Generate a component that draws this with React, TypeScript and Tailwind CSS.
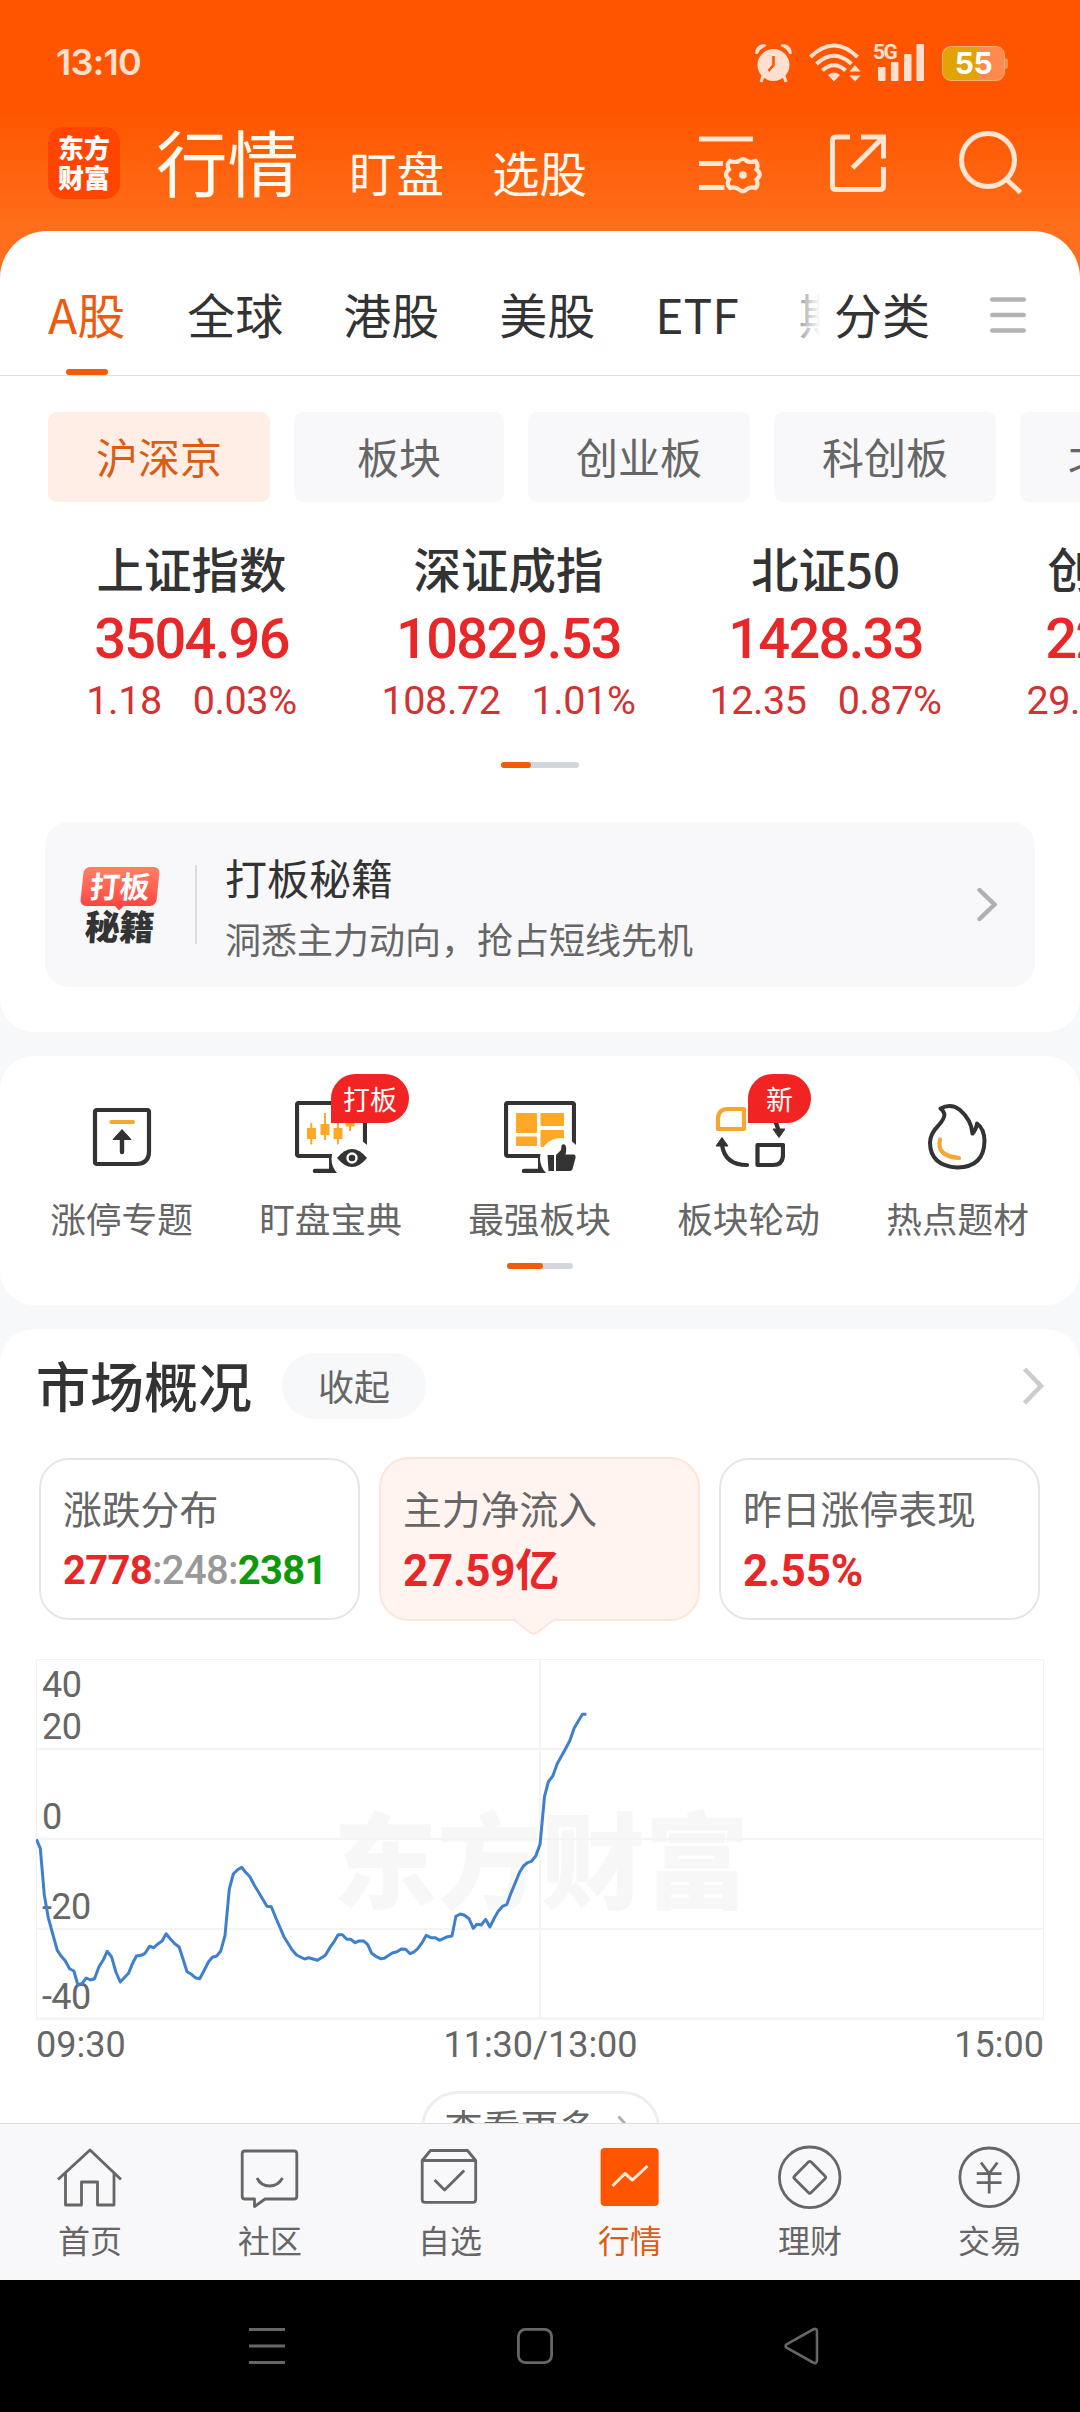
import type { ReactNode } from "react";
import clsx from "clsx";

const tabs = ["A股", "全球", "港股", "美股", "ETF", "期货"];

const boards = ["沪深京", "板块", "创业板", "科创板", "北交所"];

const indices = [
  { name: "上证指数", price: "3504.96", change: "1.18", percent: "0.03%" },
  { name: "深证成指", price: "10829.53", change: "108.72", percent: "1.01%" },
  { name: "北证50", price: "1428.33", change: "12.35", percent: "0.87%" },
  { name: "创业板指", price: "2207.10", change: "29.15", percent: "1.34%" },
];

const flowLine =
  "0.4,180.3 4.3,189.3 8.3,236 12.2,258.3 17,276 21.3,291.3 25.3,297.3 29.2,301.7 33.6,309.7 37.9,312 41.9,326 46.2,324.3 50.2,319 54.5,321 58.5,319.7 62.9,308 67.2,301 71.2,292.3 75.5,297.7 79.9,313 84.2,323 92.5,314.3 96.9,303.7 100.4,297 105.2,296.3 109.1,294.3 113.5,287.3 117.8,288.7 121.8,285 126.1,282 130.1,274.7 134.4,280 138.8,284.7 143.1,288 147.1,300.3 151,312.7 155.4,315.3 159.3,318.7 163.7,319.7 168,311.7 172.4,303 176.3,298.3 180.7,297 184.6,292.3 189,276.7 193.3,230 197.3,215 201.6,210.7 205.6,208.3 209.6,213.3 213.9,217.7 218.2,226 222.6,233.3 230.9,247.3 235.3,247.7 239.6,258.3 247.9,277.7 256.2,291 260.6,296 268.5,300 272.8,298.7 281.5,301.3 289.4,296.3 293.8,288.7 298.1,282.7 302.1,275.7 306.4,275.7 310.8,280.3 314.7,280.3 319.1,283.7 323,282 327.8,282 331.7,285.7 335.7,294.3 340.4,297.7 344.4,299.7 348.3,299.3 356.3,294 361,292.7 365.3,290 369.7,290.3 374,294.7 378,293 382,289.3 386.3,283.3 390.3,276.3 395,278.7 399.4,278.7 403.3,281.3 411.6,277.7 416,277 419.9,257.3 424.3,255 428.6,256.3 433,259.7 437.3,269.3 440.9,265.3 445.2,266 449.6,260.3 453.9,268 458.3,259 462.2,252.3 466.6,247.3 470.9,245.3 474.9,234.3 479.2,224 483.6,213.3 487.5,207 491.5,203.7 495.4,202.3 499.8,197 504.1,185 508.5,137.7 512.4,122.7 516.8,117 521.1,105 529.4,90 533.8,81.7 538.1,69.3 542.5,61.7 546.4,55.3 550.4,55.3";

const yLabels = [
  { text: "40", y: 38 },
  { text: "20", y: 80 },
  { text: "0", y: 170 },
  { text: "-20", y: 260 },
  { text: "-40", y: 350 },
];

function StatusBar() {
  return (
    <div className="flex h-[126px] items-center pl-[56px] pr-[72px] text-[#ffe0d0]">
      <span className="-mt-[3px] w-[90px] font-['Inter'] text-[36px] font-semibold leading-[40px] tracking-[-0.700px]">13:10</span>
      <svg className="ml-auto h-[40px] w-[38px]" viewBox="0 0 38 40" fill="currentColor">
        <circle cx="18.500" cy="22" r="16" />
        <path d="M0.500 11C-0.500 5 4.500 0 10.500 1.500L11.500 3Q5.500 5 2.500 11ZM36.500 11C37.500 5 32.500 0 26.500 1.500L25.500 3Q31.500 5 34.500 11Z" />
        <path d="M8 33l-2 6M29 33l2 6" stroke="currentColor" strokeWidth="3" />
        <path d="M18.500 13v9l-5 6" fill="none" stroke="#ff5500" strokeWidth="2.600" />
      </svg>
      <svg className="ml-[16px] h-[40px] w-[52px]" viewBox="0 0 52 40" fill="none" stroke="currentColor" strokeWidth="4">
        <path d="M1.500 14Q25 -9 48.500 14M7.500 21Q25 4.500 42.500 21M13.500 27.500Q25 17 36.500 27.500" />
        <path d="M19 32Q25 27 31 32L25 38.500Z" fill="currentColor" stroke="none" />
        <path d="M46 22l5.500 6.500h-11ZM46 38.500l5.500-6h-11Z" fill="currentColor" stroke="none" />
      </svg>
      <div className="ml-[12px] flex h-[40px] w-[54px]">
        <span className="w-[24px] font-['Roboto'] text-[21px] font-bold leading-[19px] tracking-[-1.500px]">5G</span>
        <svg className="-ml-[20px] mt-[1px] h-[38px] w-[48px] shrink-0" viewBox="0 0 48 38" fill="currentColor">
          <rect x="1" y="23" width="7.500" height="14" rx="1" />
          <rect x="14" y="18" width="7.500" height="19" rx="1" />
          <rect x="27" y="10" width="7.500" height="27" rx="1" />
          <rect x="39.500" y="0" width="7.500" height="37" rx="1" />
        </svg>
      </div>
      <div className="ml-[15px] flex items-center">
        <div className="flex h-[35px] w-[63px] items-center justify-center rounded-[9px] border border-[#ffb070] bg-[linear-gradient(to_right,#e2a306_0,#e2a306_59%,#ff8a50_59%)] font-['Inter'] text-[30px] font-bold leading-none tracking-[-0.500px] text-white">
          55
        </div>
        <div className="h-[11px] w-[3px] rounded-r-sm bg-[#ff8a50]" />
      </div>
    </div>
  );
}

function TitleBar() {
  return (
    <div className="flex h-[105px] items-start whitespace-nowrap pl-[48px] text-[#fffaf0]">
      <div className="mt-[1px] flex size-[72px] flex-col items-center justify-center rounded-[15px] bg-[#ff4500] pb-[3px] text-[26px] font-black leading-[30px] text-white">
        <span>东方</span>
        <span>财富</span>
      </div>
      <h1 className="-mt-[2px] ml-[36px] w-[142px] text-[71.500px] leading-[72px]">行情</h1>
      <span className="mt-[22px] ml-[51px] w-[94px] text-[47.500px] leading-[48px]">盯盘</span>
      <span className="mt-[22px] ml-[49px] w-[95px] text-[47.500px] leading-[48px]">选股</span>
      <svg className="mt-[4px] ml-[110px] h-[70px] w-[68px]" viewBox="0 0 68 70" fill="none" stroke="#ffe6d2" strokeWidth="5">
        <path d="M2 9h54M2 33.500h24M2 57.500h25.500" />
        <path
          d="M43 32Q47.500 28 50.500 32Q55 34 59.500 32Q63 36 60.500 40.500Q67 45.500 60.500 50.500Q63 56 59.500 59Q54 57 50.500 60.500Q47 64 43 60.500Q39 57 34 59Q30 55 33 50.500Q27 45.500 33 40.500Q30 35 34 32Q39 34 43 32Z"
          transform="translate(-1 -1)"
          strokeWidth="4.200"
        />
        <circle cx="46" cy="45" r="3.800" fill="#ffe6d2" stroke="none" />
      </svg>
      <svg className="mt-[4px] ml-[61px] h-[70px] w-[68px]" viewBox="0 0 68 70" fill="none" stroke="#ffe6d2" strokeWidth="5">
        <path d="M24 7H10q-3.500 0-3.500 3.500V56q0 3.500 3.500 3.500H54q3.500 0 3.500-3.500V37M35 7H57.500V28.500M57 7.500L26.500 38" />
      </svg>
      <svg className="mt-[4px] ml-[60px] h-[70px] w-[72px]" viewBox="0 0 72 70" fill="none" stroke="#ffe6d2" strokeWidth="5">
        <circle cx="34" cy="30" r="26.500" />
        <path d="M52 49L66.500 62.500" />
      </svg>
    </div>
  );
}

function TabRow() {
  return (
    <div className="flex h-[145px] items-start border-b border-[#e0e0e0] pl-[48px] text-[48px] leading-[60px] text-[#333]">
      <div className="relative flex w-[774px] gap-[60px] overflow-hidden whitespace-nowrap pt-[52px]">
        {tabs.map((tab, i) => (
          <div key={tab} className={clsx("flex shrink-0 flex-col items-center", i === 0 && "mr-[2px] text-[#ec5b10]")}>
            {tab}
            {i === 0 && <div className="mt-[26px] h-[6px] w-[42px] rounded-full bg-[#f25a0c]" />}
          </div>
        ))}
        <div className="absolute right-0 top-0 h-[130px] w-[34px] bg-linear-to-r from-white/30 to-white to-95%" />
      </div>
      <span className="ml-[12px] mt-[52px] w-[94px] whitespace-nowrap">分类</span>
      <svg className="ml-[62px] mt-[66px] h-[36px] w-[36px]" viewBox="0 0 36 36" stroke="#b3b3b3" strokeWidth="4.400" strokeLinecap="round">
        <path d="M2.200 2.500H33.800M2.200 18H33.800M2.200 33.500H33.800" />
      </svg>
    </div>
  );
}

function Pager({ className, bar }: { className: string; bar: string }) {
  return (
    <div className={clsx("mx-auto h-[6px] rounded-full bg-[#d3d6db]", className)}>
      <div className={clsx("h-full rounded-full bg-[#f25a0c]", bar)} />
    </div>
  );
}

function QuotePanel() {
  return (
    <section className="h-[801px] overflow-hidden rounded-t-[47px] rounded-b-[34px] bg-white">
      <TabRow />
      <div className="mt-[36px] flex gap-[24px] pl-[48px]">
        {boards.map((board, i) => (
          <div
            key={board}
            className={clsx(
              "flex h-[90px] shrink-0 items-center rounded-[9px] px-[48px] text-[42px] leading-[60px]",
              i === 0 ? "bg-[#ffeee6] text-[#dc5c14]" : "bg-[#f8f8fa] text-[#666]",
              board.length === 2 ? "w-[210px] justify-center" : "w-[222px]"
            )}
          >
            <span className="-mt-[3px] whitespace-nowrap">{board}</span>
          </div>
        ))}
      </div>
      <div className="flex pl-[33px] pt-[36px]">
        {indices.map((item) => (
          <div key={item.name} className="flex w-[317px] shrink-0 flex-col items-center whitespace-nowrap">
            <div className="text-[47.500px] font-medium leading-[60px] text-[#333]">{item.name}</div>
            <div className="mt-[11px] font-['Roboto'] text-[56px] font-medium leading-[60px] tracking-[-1.700px] text-[#e82828]">{item.price}</div>
            <div className="mt-[10px] flex gap-[31px] font-['Roboto'] text-[39.500px] leading-[44px] tracking-[-0.400px] text-[#d23232]">
              <span>{item.change}</span>
              <span>{item.percent}</span>
            </div>
          </div>
        ))}
      </div>
      <Pager className="mt-[39px] w-[78px]" bar="w-[30px]" />
      <div className="mx-[45px] mt-[54px] flex h-[165px] items-center rounded-[24px] bg-[#f8f8fa] pl-[35px] pr-[38px]">
        <div className="flex w-[79px] flex-col items-center font-black">
          <div className="relative flex h-[39px] w-[76px] -skew-x-6 items-center justify-center rounded-[6px] bg-linear-to-b from-[#ff8064] to-[#fb4545] text-[30px] leading-[32px] text-white">
            <span className="-mt-[3px] font-bold">打板</span>
            <div className="absolute -bottom-[3px] left-[36px] size-[7px] rotate-45 bg-[#fb4545]" />
          </div>
          <div className="mt-[1px] -skew-x-3 text-[35px] leading-[36px] tracking-[-0.500px] text-[#333]">秘籍</div>
        </div>
        <div className="ml-[36px] h-[79px] w-[2px] bg-[#dcdcde]" />
        <div className="ml-[28px] flex flex-col pt-[2px]">
          <div className="text-[42px] leading-[54px] text-[#333]">打板秘籍</div>
          <div className="mt-[10px] text-[36px] leading-[48px] text-[#666]">洞悉主力动向，抢占短线先机</div>
        </div>
        <svg className="ml-auto h-[34px] w-[20px]" viewBox="0 0 20 34" fill="none" stroke="#b0b0b0" strokeWidth="4.400">
          <path d="M2.500 2L17.500 16.500L2.500 31" strokeLinecap="round" />
        </svg>
      </div>
    </section>
  );
}

const limitUpIcon = (
  <>
    <path d="M11 9H61Q63 9 63 11V50Q63 63 50 63H11Q9 63 9 61V11Q9 9 11 9Z" stroke="#333" strokeWidth="4.200" />
    <path d="M25.500 21H47" stroke="#f5a733" strokeWidth="4.200" strokeLinecap="round" />
    <path d="M36 36V51" stroke="#333" strokeWidth="4.400" strokeLinecap="round" />
    <path d="M36 28.500L45 38.500H27Z" fill="#333" stroke="#333" strokeWidth="1" strokeLinejoin="round" />
  </>
);

const monitor = (
  <>
    <path d="M4 2H68Q70 2 70 4V53Q70 55 68 55H4Q2 55 2 53V4Q2 2 4 2Z" stroke="#333" strokeWidth="4.200" />
    <path d="M20 70H42" stroke="#333" strokeWidth="4.400" strokeLinecap="round" />
    <path d="M34 55H40V72H34Z" fill="#333" />
  </>
);

const watchIcon = (
  <>
    {monitor}
    <path d="M16.300 22V43.500M30 12V39M43 22V45M55 12V30" stroke="#ffa726" strokeWidth="2" />
    <path d="M12 27h9v11h-9ZM25.500 23h9v11h-9ZM38.500 27h9v11h-9ZM50.500 15h9v10.500h-9Z" fill="#ffa726" />
    <circle cx="57" cy="58" r="20.500" fill="white" />
    <path d="M42 57Q57 39 72 57Q57 75 42 57Z" fill="#333" />
    <circle cx="57" cy="57" r="4.500" stroke="white" strokeWidth="2.400" />
  </>
);

const strongIcon = (
  <>
    {monitor}
    <path
      d="M12.500 12.500h20v19h-20ZM37 12.500h22.500v12h-22.500ZM12.500 36h20v8.500h-20ZM37 29.500h22.500v16h-22.500Z"
      fill="#ffa726"
      stroke="#ffa726"
      strokeWidth="1"
      strokeLinejoin="round"
    />
    <circle cx="56.500" cy="57.500" r="20.500" fill="white" />
    <path d="M43.500 54h6.500v16h-5.500Z" fill="#333" />
    <path d="M52 54L57 49L57.500 44.500Q59.500 42 61.500 44.500Q63 47 61.500 53.500H70Q72 54 71.500 57L68.500 68Q68 70 66 70H52Z" fill="#333" />
  </>
);

const rotateIcon = (
  <>
    <path d="M31 8V28H5V18Q5 8 15 8Z" stroke="#f5a733" strokeWidth="4.200" strokeLinejoin="round" />
    <path d="M44.500 44H70V54Q70 64 60 64H44.500Z" stroke="#333" strokeWidth="4.200" strokeLinejoin="round" />
    <path d="M9 44Q12 64 34 64" stroke="#333" strokeWidth="4.200" strokeLinecap="round" />
    <path d="M9 36.500L15 45H3ZM66 36.500L60 28H72Z" fill="#333" stroke="#333" strokeLinejoin="round" />
    <path d="M54 12Q62 16 65.500 29" stroke="#333" strokeWidth="4.200" />
  </>
);

const flameIcon = (
  <>
    <path
      d="M18.500 7.500Q29 2 38 9Q49.500 19 50.500 32.500Q54 29 55 22.500Q62.500 28 62.500 40Q62 66 35.500 66.500Q8.500 65 8 42Q8 33 16 25Q24 16 22 12Q21 9 18.500 7.500Z"
      stroke="#333"
      strokeWidth="4"
      strokeLinejoin="round"
    />
    <path d="M18 38.500Q14 55 37 57" stroke="#f5a733" strokeWidth="4.200" strokeLinecap="round" />
  </>
);

const shortcuts: { label: string; icon: ReactNode; badge?: string }[] = [
  { label: "涨停专题", icon: limitUpIcon },
  { label: "盯盘宝典", icon: watchIcon, badge: "打板" },
  { label: "最强板块", icon: strongIcon },
  { label: "板块轮动", icon: rotateIcon, badge: "新" },
  { label: "热点题材", icon: flameIcon },
];

function ShortcutPanel() {
  return (
    <section className="mt-[24px] h-[249px] rounded-[34px] bg-white pl-[17px] pr-[18px] pt-[45px]">
      <div className="grid grid-cols-5">
        {shortcuts.map((item) => (
          <div key={item.label} className="relative flex flex-col items-center">
            <svg className="size-[72px]" viewBox="0 0 72 72" fill="none">
              {item.icon}
            </svg>
            {item.badge && (
              <div
                className={clsx(
                  "absolute -top-[27px] flex h-[49px] items-center rounded-[25px] rounded-bl-none bg-[#f22323] text-[27px] leading-[30px] text-white",
                  item.badge.length === 1 ? "left-[104px] px-[18px]" : "left-[105px] px-[12px]"
                )}
              >
                {item.badge}
              </div>
            )}
            <span className="mt-[25px] text-[35.700px] leading-[40px] text-[#666]">{item.label}</span>
          </div>
        ))}
      </div>
      <Pager className="mt-[25px] w-[66px]" bar="w-[36px]" />
    </section>
  );
}

function StatCard({ label, active, children }: { label: string; active?: boolean; children: ReactNode }) {
  return (
    <div
      className={clsx(
        "relative w-[321px] rounded-[30px] border-2 pl-[22px]",
        active ? "-mt-[1px] h-[164px] border-[#fce6da] bg-[#fff4f0] pt-[26px]" : "h-[162px] border-[#e6e6e6] bg-white pt-[25px]"
      )}
    >
      <div className="text-[38.800px] leading-[44px] text-[#666]">{label}</div>
      <div className="mt-[18px] flex items-center font-['Roboto','Noto_Sans_CJK_SC',sans-serif] font-bold leading-[48px] text-[#e82828]">{children}</div>
      {active && (
        <svg className="absolute left-[132px] top-[158px] h-[18px] w-[42px]" viewBox="0 0 42 18">
          <path d="M0 2L17 15.500Q20.500 18 24 15.500L42 2V0H0Z" fill="#fff4f0" />
          <path d="M0 2L17 15.500Q20.500 18 24 15.500L42 2" fill="none" stroke="#fce6da" strokeWidth="1.800" />
        </svg>
      )}
    </div>
  );
}

function FlowChart() {
  return (
    <div className="mx-[36px] mt-[38px] text-[#666]">
      <svg className="block h-[361px] w-[1008px]" viewBox="0 0 1008 361" fill="none">
        <text x="297" y="242" fill="#f7f7f7" className="font-['Noto_Sans_CJK_SC'] text-[104px] font-black">
          东方财富
        </text>
        <path d="M0.500 0.500H1007.500V360H0.500Z" stroke="#f2f2f2" />
        <path d="M0 90H1008M0 180H1008M0 270H1008M0 359.500H1008M504 0V360" stroke="#f4f4f4" strokeWidth="2" />
        {yLabels.map((label) => (
          <text key={label.text} x="6" y={label.y} fill="#666" className="font-['Roboto'] text-[36px] tracking-[-0.600px]">
            {label.text}
          </text>
        ))}
        <polyline points={flowLine} stroke="#3f80cc" strokeWidth="3" strokeLinejoin="round" />
      </svg>
      <div className="mt-[5px] flex justify-between font-['Roboto'] text-[36px] leading-[40px]">
        <span className="w-[200px]">09:30</span>
        <span className="pl-[1px]">11:30/13:00</span>
        <span className="w-[200px] text-right">15:00</span>
      </div>
    </div>
  );
}

function MarketPanel() {
  return (
    <section className="mt-[24px] rounded-t-[34px] bg-white pt-[24px]">
      <div className="flex h-[66px] items-center pl-[36px] pr-[35px]">
        <h2 className="-mt-[3px] text-[54px] font-medium leading-[66px] text-[#333]">市场概况</h2>
        <div className="ml-[30px] flex h-[66px] w-[144px] items-center justify-center rounded-[33px] bg-[#f7f8fa] text-[36px] leading-[44px] text-[#666]">
          <span className="-mt-[3px]">收起</span>
        </div>
        <svg className="ml-auto h-[38px] w-[23px]" viewBox="0 0 23 38" fill="none" stroke="#ccc" strokeWidth="4.600">
          <path d="M2.500 2L19 19L2.500 36" />
        </svg>
      </div>
      <div className="mt-[39px] flex gap-[19px] pl-[39px]">
        <StatCard label="涨跌分布">
          <span className="flex text-[40px] tracking-[-0.700px]">
            2778
            <span className="font-medium text-[#999]">:248:</span>
            <span className="text-[#0c9a0c]">2381</span>
          </span>
        </StatCard>
        <StatCard label="主力净流入" active>
          <span className="text-[44px] tracking-[-0.300px]">27.59亿</span>
        </StatCard>
        <StatCard label="昨日涨停表现">
          <span className="text-[44px] tracking-[-0.200px]">2.55%</span>
        </StatCard>
      </div>
      <FlowChart />
      <div className="mx-auto mt-[26px] flex h-[74px] w-[239px] items-center rounded-full border-[3px] border-[#eee] pl-[21px] text-[38px] leading-[44px] text-[#666]">
        <span className="-mt-[4px]">查看更多</span>
        <svg className="ml-[20px] h-[26px] w-[14px]" viewBox="0 0 14 26" fill="none" stroke="#b0b0b0" strokeWidth="3">
          <path d="M1.500 1.500L12 13L1.500 24.500" />
        </svg>
      </div>
    </section>
  );
}

const navItems: { label: string; active?: boolean; icon: ReactNode }[] = [
  {
    label: "首页",
    icon: <path d="M4 34.500L36 5L67 34.500M11.500 28V60H27.500V37H43.500V60H60V28" />,
  },
  {
    label: "社区",
    icon: (
      <>
        <path d="M11 6H60Q62.800 6 62.800 8.500V51.500Q62.800 54 60 54H31L20.500 61.500V54H11Q8.200 54 8.200 51.500V8.500Q8.200 6 11 6Z" />
        <path d="M23 33Q27 41 35.600 41Q44 41 48.500 33" />
      </>
    ),
  },
  {
    label: "自选",
    icon: (
      <>
        <path d="M8.200 15.500L16.500 5.500H53.500L61.700 15.500V54.500Q61.700 57.300 59 57.300H11Q8.200 57.300 8.200 54.500ZM8.200 15.500H61.700" />
        <path d="M20.600 35L30.600 45L50.200 25.500" />
      </>
    ),
  },
  {
    label: "行情",
    active: true,
    icon: (
      <>
        <rect x="6.600" y="3" width="58" height="58" rx="4" fill="#ff5500" stroke="none" />
        <path d="M18.500 41L31 28.500L38.500 35L53.500 21" stroke="#ffeadb" strokeWidth="3" />
      </>
    ),
  },
  {
    label: "理财",
    icon: (
      <>
        <circle cx="35.700" cy="32.300" r="30.300" />
        <rect x="24" y="20.500" width="23.500" height="23.500" rx="2" transform="rotate(45 35.700 32.300)" />
      </>
    ),
  },
  {
    label: "交易",
    icon: (
      <>
        <circle cx="35.200" cy="32.300" r="29.300" />
        <path d="M27 17.500L35.200 28.500L43.400 17.500M35.200 28V48.500M22.700 28.700H47.500M22.700 37.700H47.500" />
      </>
    ),
  },
];

function BottomNav() {
  return (
    <nav className="grid h-[157px] shrink-0 grid-cols-6 border-t border-[#dedfe1] bg-[#f8f8fa] pt-[21px]">
      {navItems.map((item) => (
        <div key={item.label} className="flex flex-col items-center">
          <svg className="h-[64px] w-[72px]" viewBox="0 0 72 64" fill="none" stroke="#666" strokeWidth="2.800" strokeLinejoin="round">
            {item.icon}
          </svg>
          <span className={clsx("mt-[12px] text-[32px] leading-[36px]", item.active ? "text-[#dc5c14]" : "text-[#666]")}>{item.label}</span>
        </div>
      ))}
    </nav>
  );
}

function SystemNav() {
  return (
    <div className="flex h-[132px] shrink-0 items-center bg-black pl-[247px]">
      <svg className="h-[40px] w-[40px]" viewBox="0 0 40 40" stroke="#666" strokeWidth="3">
        <path d="M2 3.500H38M2 20H38M2 36.500H38" />
      </svg>
      <svg className="ml-[228px] h-[40px] w-[40px]" viewBox="0 0 40 40" fill="none" stroke="#666" strokeWidth="2.800">
        <rect x="3.400" y="3.400" width="33.200" height="33.200" rx="7" />
      </svg>
      <svg className="ml-[227px] h-[40px] w-[40px]" viewBox="0 0 40 40" fill="none" stroke="#666" strokeWidth="2.600">
        <path d="M31 3.500Q35 1.500 35 6V34Q35 38.500 31 36.500L5 22Q2 20 5 18Z" />
      </svg>
    </div>
  );
}

export default function App() {
  return (
    <div className="flex h-[2412px] w-[1080px] flex-col overflow-hidden bg-[#f7f8fa] font-['Noto_Sans_CJK_SC',sans-serif]">
      <main className="min-h-0 flex-1 overflow-hidden">
        <div className="bg-[linear-gradient(to_bottom,#ff5500_0px,#ff5500_110px,#ff6e1a_225px,#ff6e1a_300px,#f7f8fa_300px)]">
          <StatusBar />
          <TitleBar />
          <QuotePanel />
        </div>
        <ShortcutPanel />
        <MarketPanel />
      </main>
      <BottomNav />
      <SystemNav />
    </div>
  );
}
